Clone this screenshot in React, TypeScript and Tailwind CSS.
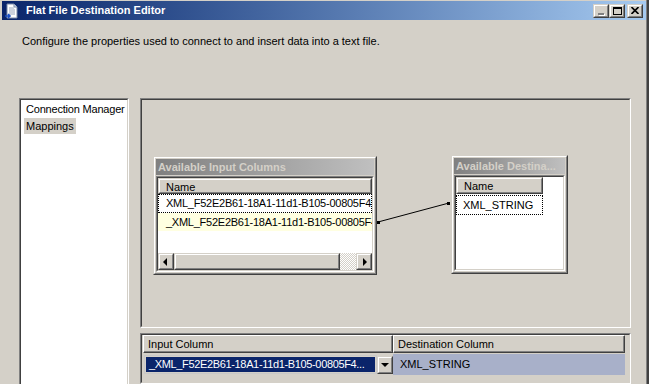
import React from 'react';

// Classic 3D borders (Windows 2000 look)
const Raised = ({ className = '', inner = '', children }: { className?: string; inner?: string; children?: React.ReactNode }) => (
  <div className={`border border-t-[#d4d0c8] border-l-[#d4d0c8] border-r-[#404040] border-b-[#404040] ${className}`}>
    <div className={`h-full w-full border border-t-white border-l-white border-r-[#808080] border-b-[#808080] bg-[#d4d0c8] ${inner}`}>
      {children}
    </div>
  </div>
);

const Sunken = ({ className = '', inner = '', children }: { className?: string; inner?: string; children?: React.ReactNode }) => (
  <div className={`border border-t-[#808080] border-l-[#808080] border-r-white border-b-white ${className}`}>
    <div className={`h-full w-full border border-t-[#404040] border-l-[#404040] border-r-[#d4d0c8] border-b-[#d4d0c8] ${inner}`}>
      {children}
    </div>
  </div>
);

const Arrow = ({ dir }: { dir: 'left' | 'right' | 'down' }) => (
  <svg width="8" height="8" viewBox="0 0 8 8">
    {dir === 'left' && <polygon points="5,0 5,8 1,4" fill="#000" />}
    {dir === 'right' && <polygon points="3,0 3,8 7,4" fill="#000" />}
    {dir === 'down' && <polygon points="0,2 8,2 4,6" fill="#000" />}
  </svg>
);

function TitleBar() {
  return (
    <div className="mt-[1px] ml-[2px] h-[19px] flex items-center bg-linear-to-r from-[#0a246a] to-[#a6caf0] pr-[3px]">
      <svg width="16" height="16" viewBox="0 0 16 16" className="ml-[2px] shrink-0">
        <path d="M3 1h7l3 3v11H3z" fill="#fff" stroke="#7a8aa8" strokeWidth="1" />
        <path d="M10 1v3h3" fill="#dde4f0" stroke="#7a8aa8" strokeWidth="1" />
        <path d="M5 5h5M5 7h6M5 9h6M5 11h6" stroke="#9aa6bc" strokeWidth="1" />
        <path d="M1 13h5M4 11l2 2-2 2" stroke="#1b4fc4" strokeWidth="1.6" fill="none" />
      </svg>
      <span className="ml-[6px] text-white font-bold text-[11px] leading-[19px] whitespace-nowrap">
        Flat File Destination Editor
      </span>
      <div className="ml-auto flex items-center">
        <Raised className="w-[16px] h-[14px]" inner="flex items-end pl-[3px] pb-[1px]">
          <div className="w-[6px] h-[2px] bg-[#808080] shadow-[1px_1px_0_#fff]" />
        </Raised>
        <Raised className="w-[16px] h-[14px]" inner="flex items-center justify-center">
          <div className="w-[9px] h-[8px] border border-black border-t-2" />
        </Raised>
        <Raised className="ml-[2px] w-[16px] h-[14px]" inner="flex items-center justify-center">
          <svg width="8" height="7" viewBox="0 0 8 7">
            <path d="M0.5 0l7 7M7.5 0l-7 7" stroke="#000" strokeWidth="1.6" />
          </svg>
        </Raised>
      </div>
    </div>
  );
}

function NodeTitle({ text }: { text: string }) {
  return (
    <div className="h-[16px] leading-[16px] pl-[2px] bg-linear-to-r from-[#808080] to-[#c0c0c0] text-[#d4d0c8] font-bold whitespace-nowrap overflow-hidden">
      {text}
    </div>
  );
}

function MappingCanvas() {
  return (
    <Sunken className="h-[230px] shrink-0" inner="relative">
      {/* Available Input Columns */}
      <Raised className="absolute left-[11px] top-[56px] w-[224px] h-[119px]" inner="p-[1px] flex flex-col">
        <NodeTitle text="Available Input Columns" />
        <Sunken className="mt-[1px] h-[96px]" inner="bg-white flex flex-col overflow-hidden">
          <Raised className="h-[16px] shrink-0" inner="pl-[6px] leading-[14px]">
            Name
          </Raised>
          <div className="h-[19px] leading-[17px] pl-[7px] border border-dotted border-black whitespace-nowrap overflow-hidden tracking-[-0.25px]">
            XML_F52E2B61-18A1-11d1-B105-00805F49916B
          </div>
          <div className="h-[18px] leading-[18px] pl-[8px] bg-[#ffffe1] whitespace-nowrap overflow-hidden tracking-[-0.25px]">
            _XML_F52E2B61-18A1-11d1-B105-00805F49916B
          </div>
          <div className="flex-1" />
          <div className="h-[17px] flex shrink-0">
            <Raised className="w-[16px] h-[17px]" inner="flex items-center justify-center">
              <Arrow dir="left" />
            </Raised>
            <Raised className="w-[166px] h-[17px]" />
            <div className="w-[16px] h-[17px] bg-[repeating-conic-gradient(#ffffff_0%_25%,#d4d0c8_0%_50%)] bg-[length:2px_2px]" />
            <Raised className="w-[16px] h-[17px]" inner="flex items-center justify-center">
              <Arrow dir="right" />
            </Raised>
          </div>
        </Sunken>
      </Raised>

      {/* Available Destination Columns */}
      <Raised className="absolute left-[309px] top-[55px] w-[117px] h-[119px]" inner="p-[1px] flex flex-col">
        <NodeTitle text="Available Destina..." />
        <Sunken className="mt-[1px] h-[96px]" inner="bg-white flex flex-col overflow-hidden">
          <Raised className="w-[87px] h-[17px] shrink-0" inner="pl-[6px] leading-[15px]">
            Name
          </Raised>
          <div className="w-[87px] h-[20px] mt-[1px] leading-[18px] pl-[6px] border border-dotted border-black whitespace-nowrap">
            XML_STRING
          </div>
        </Sunken>
      </Raised>

      {/* connector */}
      <svg className="absolute inset-0 pointer-events-none" width="487" height="226">
        <line x1="236" y1="122" x2="307" y2="103" stroke="#000" strokeWidth="1" />
        <rect x="235" y="121" width="3" height="3" fill="#000" />
        <rect x="305" y="102" width="3" height="3" fill="#000" />
      </svg>
    </Sunken>
  );
}

function MappingGrid() {
  return (
    <Sunken className="mt-[5px] flex-1" inner="bg-[#d4d0c8] pl-[1px] flex flex-col">
      <div className="flex h-[18px]">
        <div className="w-[250px] h-full border border-t-white border-l-white border-r-[#404040] border-b-[#404040] shadow-[inset_-1px_-1px_#808080] pl-[4px] leading-[16px]">
          Input Column
        </div>
        <div className="w-[232px] h-full border border-t-white border-l-white border-r-[#404040] border-b-[#404040] shadow-[inset_-1px_-1px_#808080] pl-[4px] leading-[16px]">
          Destination Column
        </div>
      </div>
      <div className="flex h-[21px] mt-[1px]">
        <div className="w-[250px] h-full flex items-center pl-[1px]">
          <div className="w-[233px] h-[19px] border border-[#c8c8c8] p-[1px]">
            <div className="h-full bg-[#0a246a] text-white pl-[3px] leading-[15px] whitespace-nowrap overflow-hidden tracking-[-0.35px]">
              _XML_F52E2B61-18A1-11d1-B105-00805F4...
            </div>
          </div>
          <Raised className="w-[16px] h-[18px]" inner="flex items-center justify-center">
            <Arrow dir="down" />
          </Raised>
        </div>
        <div className="w-[232px] h-full bg-[#a8b0c9] pl-[7px] leading-[20px]">XML_STRING</div>
      </div>
    </Sunken>
  );
}

export default function App() {
  return (
    <div className="w-[649px] h-[384px] overflow-hidden bg-[#d4d0c8] font-['Tahoma','Liberation_Sans',sans-serif] text-[11px] text-black flex">
      <div className="flex-1 min-w-0 flex flex-col">
        <TitleBar />
        <p className="h-[78px] shrink-0 pl-[22px] pt-[15px] leading-[13px] whitespace-nowrap">
          Configure the properties used to connect to and insert data into a text file.
        </p>
        <div className="flex-1 min-h-0 flex gap-[11px] pl-[19px]">
          <Sunken className="w-[110px] h-[300px] shrink-0" inner="bg-white pt-[1px] pl-[3px] flex flex-col items-start">
            <div className="h-[17px] leading-[17px] px-[2px] whitespace-nowrap tracking-[-0.2px]">Connection Manager</div>
            <div className="h-[16px] leading-[16px] px-[2px] bg-[#d4d0c8] whitespace-nowrap">Mappings</div>
          </Sunken>
          <div className="w-[491px] flex flex-col">
            <MappingCanvas />
            <MappingGrid />
          </div>
        </div>
      </div>
      <div className="w-[3px] h-full border-l border-[#808080] bg-[#404040]" />
    </div>
  );
}
